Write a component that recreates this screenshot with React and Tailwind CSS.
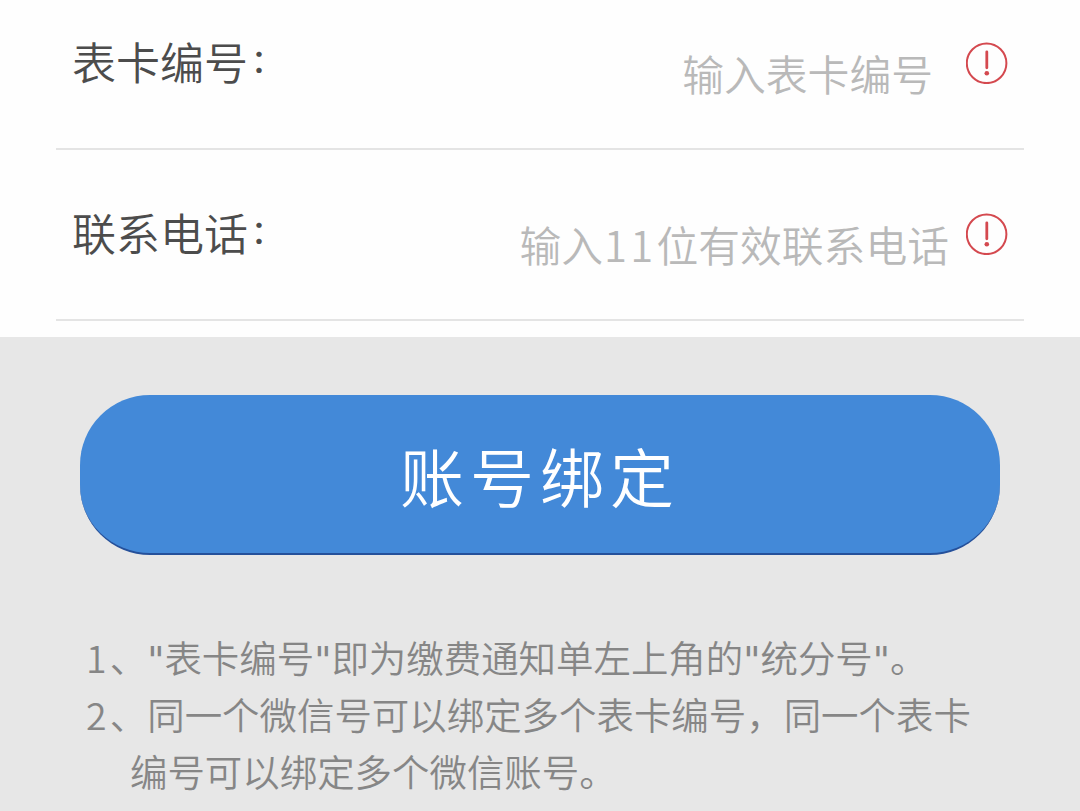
const fields = [
  { label: "表卡编号", hint: ["输入表卡编号"], row: "h-[150px] pt-[29px]", gap: "mr-[33px]" },
  { label: "联系电话", hint: ["输入", "11", "位有效联系电话"], row: "h-[171px] pt-[50px]", gap: "mr-[17px]" },
]

function AlertIcon() {
  return (
    <svg width="42" height="42" viewBox="0 0 42 42" fill="none" stroke="#d4494f" className="shrink-0 mt-[13px]">
      <circle cx="20.6" cy="21.3" r="19.8" strokeWidth="2" />
      <path d="M20.8 9.8v16" strokeWidth="2.8" strokeLinecap="round" />
      <circle cx="20.8" cy="31.2" r="2.3" fill="#d4494f" stroke="none" />
    </svg>
  )
}

const Num = ({ children }) => <span className="pl-[1px] tracking-[3.2px]">{children}</span>
const Quote = () => <span className="font-['DejaVu_Sans',sans-serif] font-normal leading-none">"</span>

export default function App() {
  return (
    <div className="w-[1080px] h-[811px] overflow-hidden bg-[#e7e7e7] font-['Noto_Sans_CJK_SC',sans-serif] font-[350] whitespace-nowrap">
      <div className="h-[337px] bg-[#fefefe] px-14">
        {fields.map((f) => (
          <div key={f.label} className={`flex justify-between border-b-2 border-[#e4e4e4] px-4 ${f.row}`}>
            <label className="text-[44px] leading-[64px] text-[#4c4c4c]">
              {f.label}
              <span className="pl-[3px] text-[32px] leading-none align-[6px] font-medium font-['Noto_Sans_CJK_TC',sans-serif] [font-feature-settings:'halt']">：</span>
            </label>
            <div className="flex">
              <span className={`pt-[11px] text-[41.8px] leading-[66px] text-[#b9b9b9] ${f.gap}`}>
                {f.hint.map((t) => (t === "11" ? <Num key={t}>{t}</Num> : t))}
              </span>
              <AlertIcon />
            </div>
          </div>
        ))}
      </div>
      <div className="px-20 pt-[58px]">
        <button className="block w-full h-[160px] rounded-[70px] bg-[#4389d8] border-b-2 border-[#25509a] text-white text-[64px] leading-[158px] tracking-[6px]">账号绑定</button>
      </div>
      <div className="pl-[85px] pt-[74px] text-[37.45px] leading-[57px] text-[#868686]">
        <p><Num>1</Num>、<Quote />表卡编号<Quote />即为缴费通知单左上角的<Quote />统分号<Quote />。</p>
        <p><Num>2</Num>、同一个微信号可以绑定多个表卡编号，同一个表卡</p>
        <p className="pl-[45px]">编号可以绑定多个微信账号。</p>
      </div>
    </div>
  )
}
